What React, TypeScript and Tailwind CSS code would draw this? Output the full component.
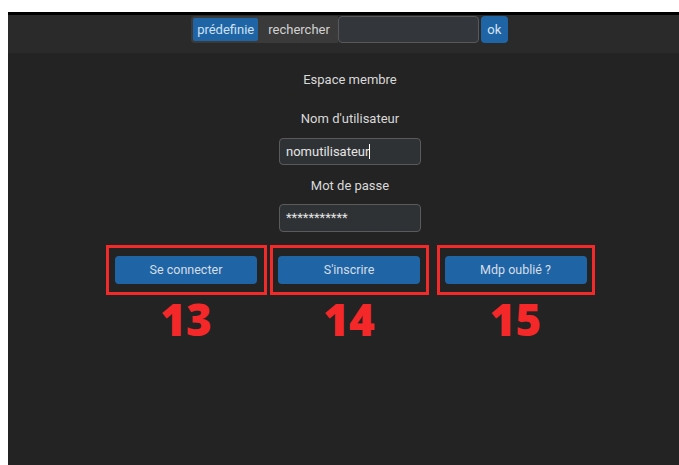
import React from 'react';

const font = { fontFamily: 'Roboto, "Noto Sans", sans-serif' };

function ActionButton({ label, num, boxClass }: { label: string; num: string; boxClass: string }) {
  return (
    <div className="flex flex-col items-center">
      <div className={`border-[3px] border-[#f22a2a] flex items-center justify-center h-[50px] ${boxClass}`}>
        <button className="w-[142px] h-[28px] rounded-[4px] bg-[#1f65a6] text-[#d6dde6] text-[12.5px]">
          {label}
        </button>
      </div>
      <div
        className="mt-[1px] text-[44px] leading-[46px] font-black text-[#f42828]"
        style={{ fontFamily: '"Open Sans", "DejaVu Sans", sans-serif' }}
      >
        {num}
      </div>
    </div>
  );
}

export default function App() {
  return (
    <div className="w-[679px] h-[465px] bg-white pt-[12px] pl-[8px] overflow-hidden" style={font}>
      <div className="h-full flex flex-col bg-[#232323] border-t-[3px] border-black">
        {/* top bar */}
        <div className="h-[38px] bg-[#2a2a2a] flex justify-center pl-[12px] pt-[1px]">
          <div className="flex items-stretch h-[27px]">
            <div className="flex items-center bg-[#3a3a3a] rounded-l-[4px] pl-[2px] pr-[8px] gap-[10px]">
              <span className="bg-[#1f65a6] text-[#cfe0f2] text-[13px] px-[4px] h-[23px] flex items-center rounded-[2px]">
                prédefinie
              </span>
              <span className="text-[#d2d2d2] text-[13px]">rechercher</span>
            </div>
            <input
              className="w-[141px] bg-[#33373b] border border-[#585858] rounded-[4px] outline-none"
              readOnly
            />
            <button className="ml-[2px] w-[27px] bg-[#1f65a6] text-[#d6e4f2] text-[13px] rounded-[4px]">ok</button>
          </div>
        </div>

        {/* login form */}
        <div className="flex flex-col items-center pl-[13px] pt-[19px] text-[#d9d9d9] text-[13px]">
          <div className="h-[16px] leading-[16px]">Espace membre</div>
          <div className="mt-[23px] h-[16px] leading-[16px]">Nom d'utilisateur</div>
          <div className="mt-[11px] w-[142px] h-[27px] bg-[#2f3235] border border-[#5a5a5a] rounded-[4px] flex items-center px-[6px] text-[#e4e4e4]">
            nomutilisateur<span className="w-px h-[15px] bg-white" />
          </div>
          <div className="mt-[13px] h-[16px] leading-[16px]">Mot de passe</div>
          <div className="mt-[10px] w-[142px] h-[28px] bg-[#2f3235] border border-[#5a5a5a] rounded-[4px] flex items-center px-[6px] text-[#e4e4e4] text-[13px]">
            ***********
          </div>

          <div className="mt-[13px] flex items-start">
            <ActionButton label="Se connecter" num="13" boxClass="w-[161px]" />
            <div className="w-[3px]" />
            <ActionButton label="S'inscrire" num="14" boxClass="w-[159px]" />
            <div className="w-[8px]" />
            <ActionButton label="Mdp oublié ?" num="15" boxClass="w-[158px]" />
          </div>
        </div>
      </div>
    </div>
  );
}
